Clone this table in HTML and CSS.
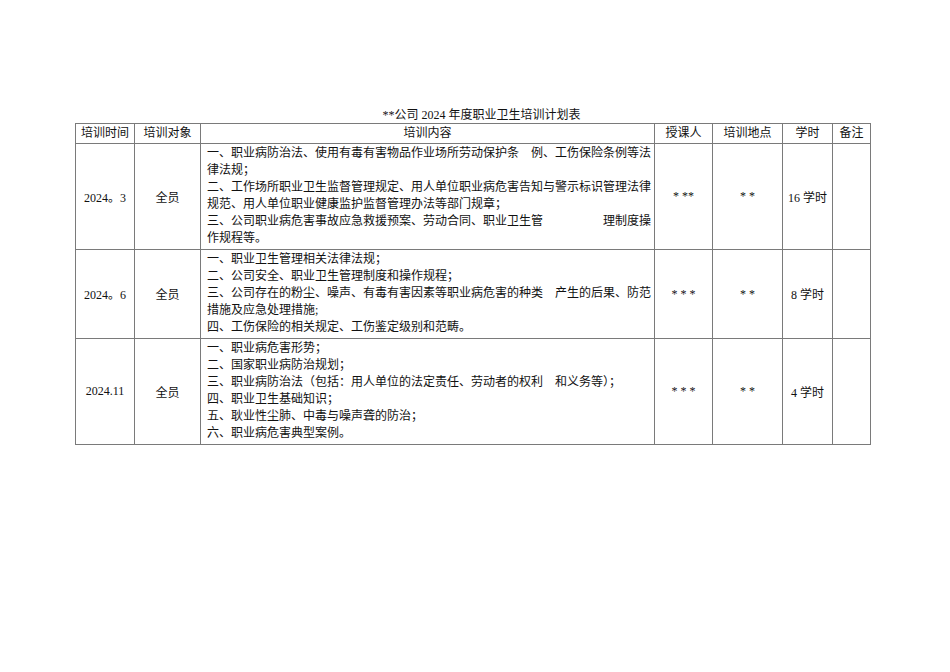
FILE: index.html
```html
<!DOCTYPE html>
<html lang="zh">
<head>
<meta charset="utf-8">
<link rel="stylesheet" href="styles.css">
</head>
<body>
<div class="page">
  <div class="title">**公司 2024 年度职业卫生培训计划表</div>
  <table class="plan">
    <colgroup>
      <col class="c1"><col class="c2"><col class="c3"><col class="c4"><col class="c5"><col class="c6"><col class="c7">
    </colgroup>
    <thead>
      <tr class="head">
        <th>培训时间</th><th>培训对象</th><th>培训内容</th><th>授课人</th><th>培训地点</th><th>学时</th><th>备注</th>
      </tr>
    </thead>
    <tbody>
      <tr>
        <td class="ctr">2024。3</td>
        <td class="ctr">全员</td>
        <td class="content"><div class="txt">一、职业病防治法、使用有毒有害物品作业场所劳动保护条　例、工伤保险条例等法律法规；</div><div class="txt">二、工作场所职业卫生监督管理规定、用人单位职业病危害告知与警示标识管理法律规范、用人单位职业健康监护监督管理办法等部门规章；</div><div class="txt">三、公司职业病危害事故应急救援预案、劳动合同、职业卫生管　　　　　理制度操作规程等。</div></td>
        <td class="ctr">* **</td>
        <td class="ctr">* *</td>
        <td class="ctr">16 学时</td>
        <td></td>
      </tr>
      <tr>
        <td class="ctr">2024。6</td>
        <td class="ctr">全员</td>
        <td class="content"><div class="txt">一、职业卫生管理相关法律法规；</div><div class="txt">二、公司安全、职业卫生管理制度和操作规程；</div><div class="txt">三、公司存在的粉尘、噪声、有毒有害因素等职业病危害的种类　产生的后果、防范措施及应急处理措施;</div><div class="txt">四、工伤保险的相关规定、工伤鉴定级别和范畴。</div></td>
        <td class="ctr">* * *</td>
        <td class="ctr">* *</td>
        <td class="ctr">8 学时</td>
        <td></td>
      </tr>
      <tr>
        <td class="ctr">2024.11</td>
        <td class="ctr">全员</td>
        <td class="content"><div class="txt">一、职业病危害形势；</div><div class="txt">二、国家职业病防治规划；</div><div class="txt">三、职业病防治法（包括：用人单位的法定责任、劳动者的权利　和义务等）；</div><div class="txt">四、职业卫生基础知识；</div><div class="txt">五、耿业性尘肺、中毒与噪声聋的防治；</div><div class="txt">六、职业病危害典型案例。</div></td>
        <td class="ctr">* * *</td>
        <td class="ctr">* *</td>
        <td class="ctr">4 学时</td>
        <td></td>
      </tr>
    </tbody>
  </table>
</div>
</body>
</html>
```

FILE: styles.css
```css
html, body {
  margin: 0;
  padding: 0;
  background: #ffffff;
}
body {
  font-family: "Liberation Serif", "Noto Sans CJK SC", serif;
  font-size: 12px;
  color: #111;
}
.page {
  padding: 107px 0 0 75px;
  width: 795px;
}
.title {
  text-align: center;
  padding-left: 18px;
  line-height: 16px;
  height: 16px;
}
.plan {
  border-collapse: collapse;
  table-layout: fixed;
  width: 795px;
}
.c1 { width: 59px; }
.c2 { width: 66px; }
.c3 { width: 454px; }
.c4 { width: 58px; }
.c5 { width: 70px; }
.c6 { width: 50px; }
.c7 { width: 38px; }
.plan th, .plan td {
  border: 1px solid #7a7a7a;
  padding: 0;
  font-weight: normal;
  vertical-align: middle;
}
.head th {
  height: 19px;
  line-height: 19px;
  text-align: center;
}
.ctr {
  text-align: center;
}
.content {
  padding: 1px 4px 2px 6px !important;
  text-align: justify;
  line-height: 17px;
}
.txt {
  width: 444px;
}
```
